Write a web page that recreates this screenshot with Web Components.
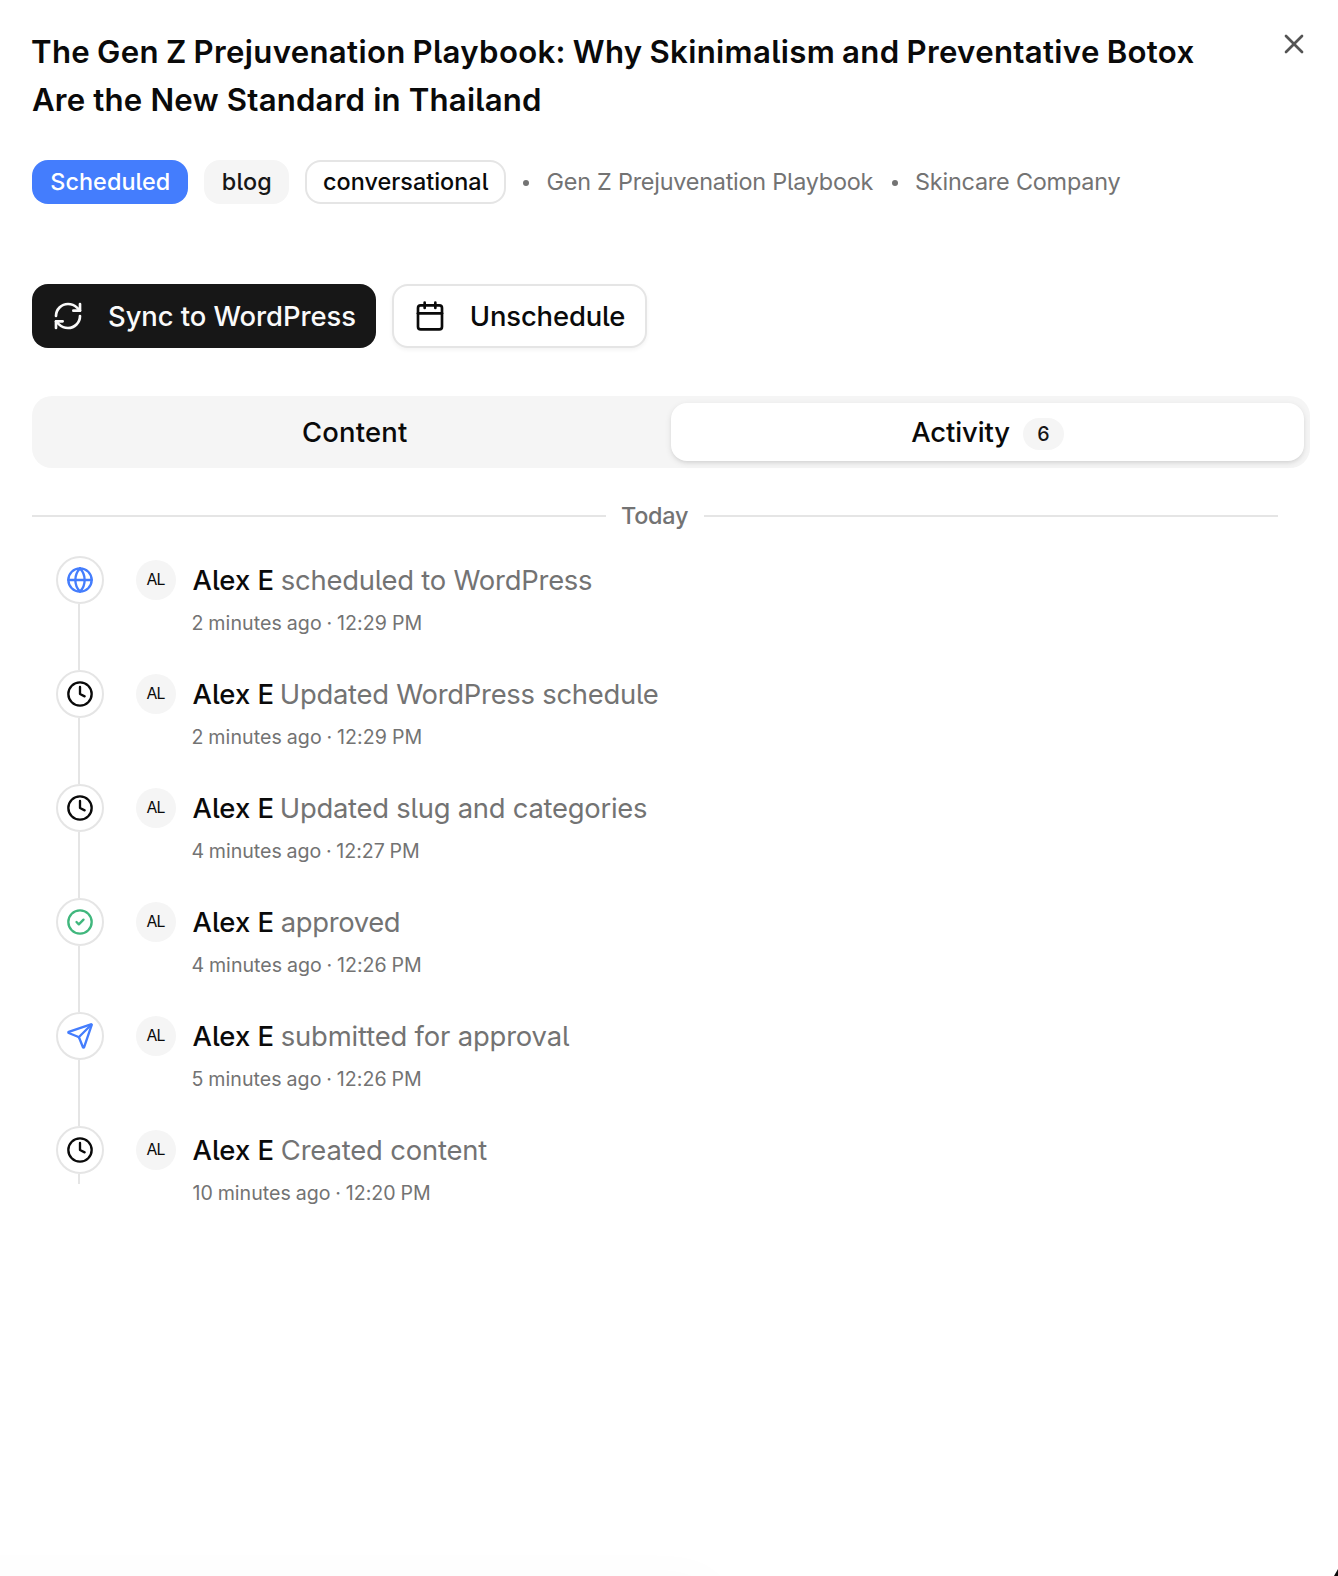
<!DOCTYPE html>
<html lang="en">
<head>
<meta charset="utf-8">
<title>Content activity</title>
<style>
html, body { margin: 0; height: 100%; overflow: hidden; background: #fff; }
body { font-family: Inter, "Liberation Sans", sans-serif; color: #0a0a0a; }
</style>
</head>
<body>
<content-sheet></content-sheet>
<script>
const ICONS = {
  x: '<path d="M18 6 6 18"/><path d="m6 6 12 12"/>',
  refresh: '<path d="M3 12a9 9 0 0 1 9-9 9.75 9.75 0 0 1 6.74 2.74L21 8"/><path d="M21 3v5h-5"/><path d="M21 12a9 9 0 0 1-9 9 9.75 9.75 0 0 1-6.74-2.74L3 16"/><path d="M8 16H3v5"/>',
  calendar: '<path d="M8 2v4"/><path d="M16 2v4"/><rect width="18" height="18" x="3" y="4" rx="2"/><path d="M3 10h18"/>',
  globe: '<circle cx="12" cy="12" r="10"/><path d="M12 2a14.5 14.5 0 0 0 0 20 14.5 14.5 0 0 0 0-20"/><path d="M2 12h20"/>',
  clock: '<circle cx="12" cy="12" r="10"/><path d="M12 6v6l4 2"/>',
  check: '<circle cx="12" cy="12" r="10"/><path d="m9 12 2 2 4-4"/>',
  send: '<path d="M14.536 21.686a.5.5 0 0 0 .937-.024l6.5-19a.496.496 0 0 0-.635-.635l-19 6.5a.5.5 0 0 0-.024.937l7.93 3.18a2 2 0 0 1 1.112 1.11z"/><path d="m21.854 2.147-10.94 10.939"/>'
};

class Base extends HTMLElement {
  connectedCallback() {
    if (this.shadowRoot) return;
    this.attachShadow({ mode: 'open' }).innerHTML = this.render();
  }
}

/* Inline SVG icon on a 24-unit grid. */
customElements.define('ui-icon', class extends Base {
  render() {
    const s = this.getAttribute('size') || 32;
    return `<style>:host{display:block;flex:none;width:${s}px;height:${s}px}svg{display:block}</style>
      <svg width="${s}" height="${s}" viewBox="0 0 24 24" fill="none" stroke="currentColor" stroke-width="2" stroke-linecap="round" stroke-linejoin="round">${ICONS[this.getAttribute('name')]}</svg>`;
  }
});

/* One line of text, tracked so that its ink spans the width given. */
const ctx = document.createElement('canvas').getContext('2d');
customElements.define('text-run', class extends HTMLElement {
  connectedCallback() {
    if (this.shadowRoot) return;
    const root = this.attachShadow({ mode: 'open' });
    const text = this.getAttribute('text');
    root.innerHTML = `<style>:host{display:block;flex:none;white-space:pre}span{display:inline-block;font-feature-settings:"cv05"}</style><span></span>`;
    const span = root.querySelector('span');
    span.textContent = text;
    const w = parseFloat(this.getAttribute('w'));
    this.style.width = w + 'px';
    const cs = getComputedStyle(span);
    ctx.font = `${cs.fontWeight} ${cs.fontSize} ${cs.fontFamily}`;
    const m = ctx.measureText(text);
    const left = -m.actualBoundingBoxLeft, right = m.width - m.actualBoundingBoxRight;
    const ink = span.getBoundingClientRect().width - left - right;
    if (text.length > 1) span.style.letterSpacing = ((w - ink) / (text.length - 1)).toFixed(3) + 'px';
    span.style.marginLeft = (-left).toFixed(2) + 'px';
  }
});

customElements.define('ui-badge', class extends Base {
  render() {
    return `<style>
      :host{display:flex;align-items:center;justify-content:center;box-sizing:border-box;height:44px;border-radius:16px;font-size:23.4px;line-height:44px;font-weight:500}
      :host([kind=primary]){background:#447dfd;color:#fff;width:156px;font-weight:450}
      :host([kind=secondary]){background:#f5f5f5;color:#171717;width:85px}
      :host([kind=outline]){border:2px solid #e5e5e5;width:201px}
      </style><slot></slot>`;
  }
});

customElements.define('ui-button', class extends Base {
  render() {
    return `<style>
      :host{display:flex;align-items:center;box-sizing:border-box;height:64px;border-radius:16px;font-size:27.4px;line-height:60px;font-weight:500;gap:25px}
      :host([kind=primary]){background:#171717;color:#fafafa;width:344px;padding-left:20px}
      :host([kind=outline]){background:#fff;border:2px solid #e5e5e5;width:255px;padding-left:20px;box-shadow:0 2px 4px rgba(0,0,0,.05)}
      </style><ui-icon name="${this.getAttribute('icon')}"></ui-icon><slot></slot>`;
  }
});

customElements.define('tab-bar', class extends Base {
  render() {
    return `<style>
      :host{display:flex;box-sizing:border-box;width:1278px;height:72px;padding:7px 6px;background:#f5f5f5;border-radius:20px;font-size:27.4px;line-height:58px;font-weight:500}
      .tab{display:flex;flex:1;align-items:center;justify-content:center;height:58px;border-radius:16px;gap:12.5px}
      .on{background:#fff;box-shadow:0 2px 6px rgba(0,0,0,.1),0 2px 4px -2px rgba(0,0,0,.1)}
      .count{display:flex;justify-content:center;width:41px;height:32px;line-height:32px;border-radius:16px;background:#f5f5f5;font-size:19.6px;color:#171717;margin-top:4px;box-sizing:border-box;padding-left:1.5px}
      </style>
      <div class="tab"><text-run text="Content" w="104" style="margin-left:1px"></text-run></div>
      <div class="tab on"><text-run text="Activity" w="99"></text-run><div class="count"><text-run text="6" w="11.5"></text-run></div></div>`;
  }
});

customElements.define('day-divider', class extends Base {
  render() {
    return `<style>
      :host{display:flex;align-items:center;width:1246px;height:32px;gap:16px;color:#737373;font-size:23.4px;line-height:32px;font-weight:500}
      i{flex:1;height:2px;background:#e5e5e5}
      </style><i></i><text-run text="Today" w="66"></text-run><i></i>`;
  }
});

customElements.define('activity-item', class extends Base {
  render() {
    const a = n => this.getAttribute(n);
    return `<style>
      :host{display:flex;height:114px;align-items:flex-start}
      :host([last]){height:84px}
      .rail{display:flex;flex-direction:column;align-items:center;width:48px;height:100%;margin-right:32px}
      :host([last]) .rail{height:58px}
      .node{display:flex;flex:none;align-items:center;justify-content:center;box-sizing:border-box;width:48px;height:48px;border:2px solid #e5e5e5;border-radius:50%;background:#fff}
      .line{width:2px;flex:1;background:#e5e5e5;margin-right:2px}
      .avatar{display:flex;align-items:center;justify-content:center;width:40px;height:40px;margin:4px 16.5px 0 0;border-radius:50%;background:#f5f5f5;font-size:15.8px;line-height:38px}
      .head{display:flex;gap:9.3px;height:40px;padding-top:4px;font-size:27.4px;line-height:40px}
      .name{font-weight:500}
      .act,.time{color:#737373}
      .time{font-size:19.6px;line-height:32px;padding-top:7px;word-spacing:-.8px}
      </style>
      <div class="rail"><div class="node" style="color:${a('tint') || '#0a0a0a'}"><ui-icon name="${a('icon')}" size="28"></ui-icon></div><div class="line"></div></div>
      <div class="avatar"><text-run text="AL" w="18.8"></text-run></div>
      <div>
        <div class="head"><text-run class="name" text="Alex E" w="80"></text-run><text-run class="act" text="${a('action')}" w="${a('aw')}"></text-run></div>
        <div class="time"><text-run text="${a('time')}" w="${a('tw')}"></text-run></div>
      </div>`;
  }
});

customElements.define('content-sheet', class extends Base {
  render() {
    return `<style>
      :host{display:block;position:relative;box-sizing:border-box;width:1338px;height:1576px;padding:28px 28px 0 32px;background:#fff;overflow:hidden}
      header{display:flex;justify-content:space-between;align-items:flex-start}
      h1{margin:0;font-size:31.2px;line-height:48px;font-weight:600}
      .first{word-spacing:-1.2px}
      header ui-icon{color:#545454}
      .close{width:32px}
      .meta{display:flex;align-items:center;gap:16px;margin-top:36px;font-size:23.4px;line-height:44px;color:#737373}
      .dot{width:6px;height:6px;border-radius:50%;background:#737373;margin:2px 2px 0}
      .actions{display:flex;gap:16px;margin-top:80px}
      tab-bar{margin-top:48px}
      day-divider{margin-top:32px}
      .list{margin:24px 0 0 24px}
      .haze{position:absolute;left:-80px;bottom:-60px;width:800px;height:60px;border-radius:30px;box-shadow:0 0 50px rgba(0,0,0,.02)}
      .corner{position:absolute;right:0;bottom:0;width:4px;height:7px;background:#0a0a0a;clip-path:polygon(100% 0,100% 100%,0 100%)}
      </style>
      <header>
        <h1><text-run class="first" text="The Gen Z Prejuvenation Playbook: Why Skinimalism and Preventative Botox" w="1161.5"></text-run><text-run text="Are the New Standard in Thailand" w="508"></text-run></h1>
        <ui-icon class="close" name="x"></ui-icon>
      </header>
      <div class="meta">
        <ui-badge kind="primary" style="color:#fff"><text-run text="Scheduled" w="117.5"></text-run></ui-badge>
        <ui-badge kind="secondary"><text-run text="blog" w="47.5"></text-run></ui-badge>
        <ui-badge kind="outline" style="color:#0a0a0a"><text-run text="conversational" w="163.5" style="margin-left:.5px"></text-run></ui-badge>
        <span class="dot" style="margin-left:1px"></span><text-run text="Gen Z Prejuvenation Playbook" w="326" style="margin-left:.5px"></text-run>
        <span class="dot"></span><text-run text="Skincare Company" w="204.5" style="margin-left:.5px"></text-run>
      </div>
      <div class="actions">
        <ui-button kind="primary" icon="refresh"><text-run text="Sync to WordPress" w="246.3"></text-run></ui-button>
        <ui-button kind="outline" icon="calendar"><text-run text="Unschedule" w="152.5" style="margin-left:.8px"></text-run></ui-button>
      </div>
      <tab-bar></tab-bar>
      <day-divider></day-divider>
      <div class="list">
        <activity-item icon="globe" tint="#447dfd" action="scheduled to WordPress" aw="310.3" time="2 minutes ago · 12:29 PM" tw="228"></activity-item>
        <activity-item icon="clock" action="Updated WordPress schedule" aw="376" time="2 minutes ago · 12:29 PM" tw="228"></activity-item>
        <activity-item icon="clock" action="Updated slug and categories" aw="365.3" time="4 minutes ago · 12:27 PM" tw="225.5"></activity-item>
        <activity-item icon="check" tint="#40b77d" action="approved" aw="117" time="4 minutes ago · 12:26 PM" tw="227.5"></activity-item>
        <activity-item icon="send" tint="#447dfd" action="submitted for approval" aw="286" time="5 minutes ago · 12:26 PM" tw="227.5"></activity-item>
        <activity-item last icon="clock" action="Created content" aw="205.5" time="10 minutes ago · 12:20 PM" tw="236.5"></activity-item>
      </div>
      <div class="haze"></div><div class="corner"></div>`;
  }
});
</script>
</body>
</html>
